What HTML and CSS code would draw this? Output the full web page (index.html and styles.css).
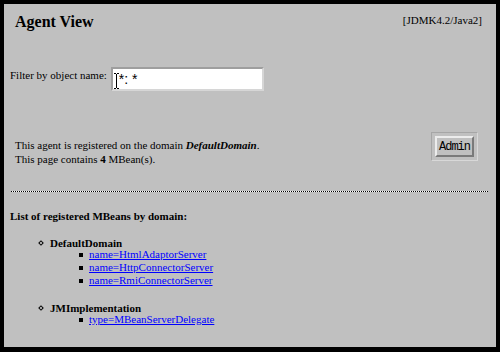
FILE: index.html
```html
<!DOCTYPE html>
<html>
<head>
<meta charset="utf-8">
<title>Agent View</title>
<link rel="stylesheet" href="styles.css">
</head>
<body>
<div class="frame">
  <header class="top">
    <h1 class="title">Agent View</h1>
    <span class="ver">[JDMK4.2/Java2]</span>
  </header>

  <form class="filter">
    <label class="filter-label" for="q">Filter by object name:</label>
    <span class="field">
      <input id="q" class="filter-input" type="text" value="*: *">
      <svg class="ibeam" width="5" height="16" viewBox="0 0 5 16"><path d="M0 0.5H2M3 0.5H5M2.5 1V15M0 15.5H2M3 15.5H5" stroke="#000" stroke-width="1" fill="none"/></svg>
    </span>
  </form>

  <div class="info">
    <p class="info-text">This agent is registered on the domain <b><i>DefaultDomain</i></b>.<br>This page contains <b>4</b> MBean(s).</p>
    <div class="admin-box"><button class="admin-btn" type="button">Admin</button></div>
  </div>

  <div class="dots"></div>

  <h2 class="list-title">List of registered MBeans by domain:</h2>

  <ul class="domains">
    <li class="domain"><b>DefaultDomain</b>
      <ul class="beans">
        <li class="bean"><a href="#">name=HtmlAdaptorServer</a></li>
        <li class="bean"><a href="#">name=HttpConnectorServer</a></li>
        <li class="bean"><a href="#">name=RmiConnectorServer</a></li>
      </ul>
    </li>
    <li class="domain domain-next"><b>JMImplementation</b>
      <ul class="beans">
        <li class="bean"><a href="#">type=MBeanServerDelegate</a></li>
      </ul>
    </li>
  </ul>
</div>
</body>
</html>
```

FILE: styles.css
```css
html, body {
  margin: 0;
  padding: 0;
  background: #000;
}

.frame {
  box-sizing: border-box;
  width: 500px;
  height: 352px;
  border: 4px solid #000;
  border-bottom-width: 5px;
  background: #c0c0c0;
  padding: 9px 8px 0 6px;
  overflow: hidden;
  font-family: "Liberation Serif", "Times New Roman", serif;
  font-size: 11px;
  line-height: 13px;
  color: #000;
}

.top {
  display: flex;
  justify-content: space-between;
  align-items: flex-start;
  padding: 0 6px 0 5px;
}

.title {
  margin: 0;
  font-size: 16px;
  line-height: 18px;
  font-weight: bold;
}

.ver {
  margin-top: 1px;
}

.filter {
  display: flex;
  align-items: flex-start;
  gap: 4px;
  margin: 36px 0 0;
}

.filter-label {
  margin-top: 2px;
}

.field {
  position: relative;
  display: block;
}

.filter-input {
  box-sizing: border-box;
  display: block;
  width: 153px;
  height: 24px;
  margin: 0;
  padding: 0 0 0 6px;
  border: 2px solid;
  border-color: #9e9e9e #d6d6d6 #d6d6d6 #9e9e9e;
  background: #fff;
  font-family: "Liberation Sans", Arial, sans-serif;
  font-size: 14px;
  color: #000;
  outline: none;
}

.ibeam {
  position: absolute;
  left: 3px;
  top: 6px;
}

.info {
  display: flex;
  justify-content: space-between;
  align-items: flex-start;
  margin-top: 41px;
}

.info-text {
  margin: 6px 0 0;
  padding-left: 5px;
  line-height: 14px;
}

.admin-box {
  margin-right: 10px;
  padding: 3px;
  border: 1px solid;
  border-color: #a6a6a6 #d8d8d8 #d8d8d8 #a6a6a6;
}

.admin-btn {
  box-sizing: border-box;
  display: block;
  width: 39px;
  height: 21px;
  margin: 0;
  padding: 0;
  border: 2px solid;
  border-color: #ececec #7a7a7a #7a7a7a #ececec;
  background: #c0c0c0;
  font-family: "Liberation Mono", "Courier New", monospace;
  font-size: 12px;
  letter-spacing: -1px;
  color: #000;
}

.dots {
  height: 1px;
  margin: 25px 0 0 1px;
  background: repeating-linear-gradient(90deg, #000 0 1px, #fff 1px 2px);
}

.list-title {
  margin: 18px 0 0;
  font-size: 11px;
  line-height: 13px;
  font-weight: bold;
}

.domains {
  list-style: none;
  margin: 14px 0 0;
  padding: 0 0 0 40px;
}

.domain::before {
  content: "";
  display: inline-block;
  box-sizing: border-box;
  width: 4px;
  height: 4px;
  border: 1px solid #000;
  transform: rotate(45deg);
  margin: 0 7px 0 -11px;
  vertical-align: 2px;
}

.domain-next {
  margin-top: 15px;
}

.beans {
  list-style: none;
  margin: -2px 0 0;
  padding: 0 0 0 39px;
}

.bean::before {
  content: "";
  display: inline-block;
  width: 4px;
  height: 4px;
  background: #000;
  margin: 0 6px 0 -10px;
  vertical-align: 1px;
}

.bean a {
  color: #0000ff;
  text-decoration: underline;
}
```
